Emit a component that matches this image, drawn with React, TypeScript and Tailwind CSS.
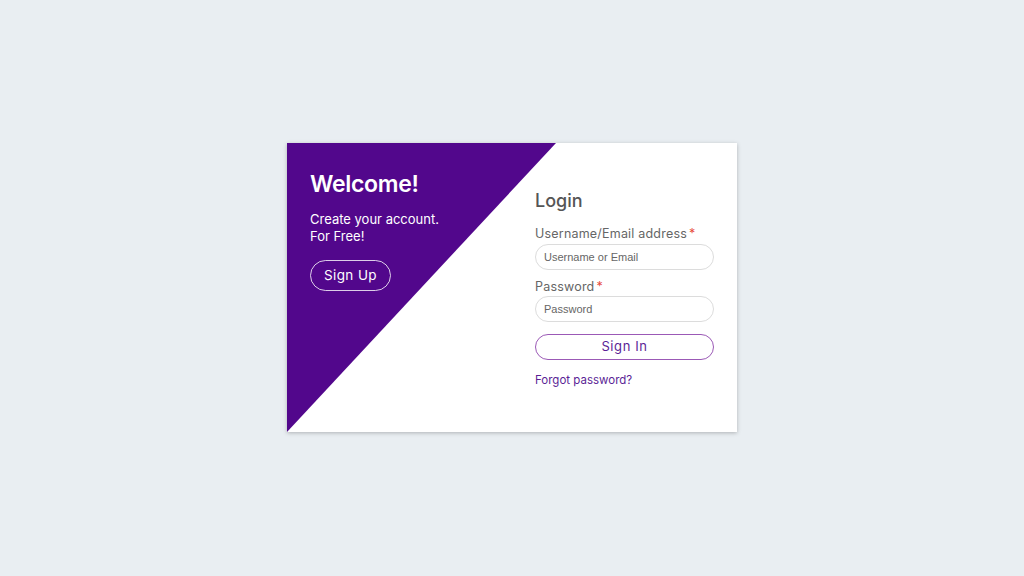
export default function App() {
  return (
    <div
      className="w-full h-[576px] bg-[#e9eef2] flex items-center justify-center"
      style={{ fontFamily: "Inter, 'Noto Sans', sans-serif" }}
    >
      <div className="relative w-[450px] h-[289px] bg-white shadow-[0_1px_4px_rgba(0,0,0,0.25)] flex -mt-[1px]">
        <div className="absolute inset-0 bg-[#52078c] [clip-path:polygon(0_0,269px_0,0_100%)]" />
        <div className="relative w-[248px] pl-[23px] pt-[25px] text-white">
          <h1 className="text-[23px] font-semibold tracking-[-0.3px] leading-[32px]">Welcome!</h1>
          <p className="mt-[11px] text-[13px] leading-[17px]">
            Create your account.
            <br />
            For Free!
          </p>
          <button className="mt-[15px] w-[81px] h-[31px] rounded-full border border-white/80 text-[13.5px] tracking-[0.4px]">
            Sign Up
          </button>
        </div>
        <div className="relative w-[179px] pt-[45px]">
          <h2 className="text-[18px] font-medium text-[#555] leading-[26px]">Login</h2>
          <label className="block mt-[12px] text-[12.5px] text-[#666] leading-[16px] tracking-[0.2px]">
            Username/Email address<span className="text-[#e74c3c] ml-[2px]">*</span>
          </label>
          <input
            className="mt-[2px] w-full h-[26px] rounded-full border border-[#dcdcdc] px-[8px] text-[11px] placeholder:text-[#666] outline-none"
            style={{ fontFamily: "'Liberation Sans', Arial, sans-serif" }}
            placeholder="Username or Email"
          />
          <label className="block mt-[9px] text-[12.5px] text-[#666] leading-[16px] tracking-[0.2px]">
            Password<span className="text-[#e74c3c] ml-[2px]">*</span>
          </label>
          <input
            type="password"
            className="mt-[1px] w-full h-[26px] rounded-full border border-[#dcdcdc] px-[8px] text-[11px] placeholder:text-[#666] outline-none"
            style={{ fontFamily: "'Liberation Sans', Arial, sans-serif" }}
            placeholder="Password"
          />
          <button className="mt-[12px] w-full h-[26px] rounded-full border border-[#9b59b6] text-[#5b1f96] text-[13px] tracking-[0.6px]">
            Sign In
          </button>
          <a href="#" className="block mt-[12px] text-[11.5px] text-[#5b1f96] leading-[16px]">
            Forgot password?
          </a>
        </div>
      </div>
    </div>
  );
}
